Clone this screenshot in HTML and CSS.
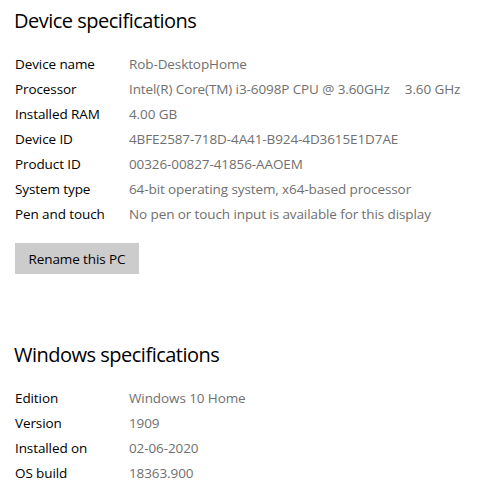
FILE: index.html
```html
<!DOCTYPE html>
<html>
<head>
<meta charset="utf-8">
<link rel="stylesheet" href="styles.css">
</head>
<body>
<main class="page">
  <section class="section">
    <h1 class="title">Device specifications</h1>
    <dl class="specs">
      <dt>Device name</dt><dd>Rob-DesktopHome</dd>
      <dt>Processor</dt><dd>Intel(R) Core(TM) i3-6098P CPU @ 3.60GHz<span class="gap"></span>3.60 GHz</dd>
      <dt>Installed RAM</dt><dd>4.00 GB</dd>
      <dt>Device ID</dt><dd>4BFE2587-718D-4A41-B924-4D3615E1D7AE</dd>
      <dt>Product ID</dt><dd>00326-00827-41856-AAOEM</dd>
      <dt>System type</dt><dd>64-bit operating system, x64-based processor</dd>
      <dt>Pen and touch</dt><dd>No pen or touch input is available for this display</dd>
    </dl>
    <button class="btn">Rename this PC</button>
  </section>
  <section class="section second">
    <h1 class="title">Windows specifications</h1>
    <dl class="specs">
      <dt>Edition</dt><dd>Windows 10 Home</dd>
      <dt>Version</dt><dd>1909</dd>
      <dt>Installed on</dt><dd>02-06-2020</dd>
      <dt>OS build</dt><dd>18363.900</dd>
    </dl>
  </section>
</main>
</body>
</html>
```
FILE: styles.css
```css
html, body {
  margin: 0;
  background: #fff;
}
body {
  font-family: "Open Sans", "Noto Sans", sans-serif;
  color: #000;
}
.page {
  padding: 6px 0 0 14px;
}
.title {
  margin: 0;
  font-size: 20px;
  font-weight: 400;
  line-height: 30px;
  letter-spacing: -0.5px;
}
.specs {
  display: grid;
  grid-template-columns: 114px auto;
  grid-auto-rows: 25px;
  margin: 16px 0 0 1px;
  font-size: 13.5px;
  line-height: 25px;
  letter-spacing: -0.1px;
}
.specs dt, .specs dd {
  margin: 0;
  white-space: nowrap;
}
.specs dd {
  color: #707070;
}
.gap {
  display: inline-block;
  width: 15px;
}
.btn {
  display: block;
  margin: 16px 0 0 1px;
  width: 124px;
  height: 31px;
  border: none;
  background: #cccccc;
  font-family: inherit;
  font-size: 13.5px;
  letter-spacing: -0.1px;
  color: #000;
  padding: 0;
}
.second {
  margin-top: 66px;
}
```
